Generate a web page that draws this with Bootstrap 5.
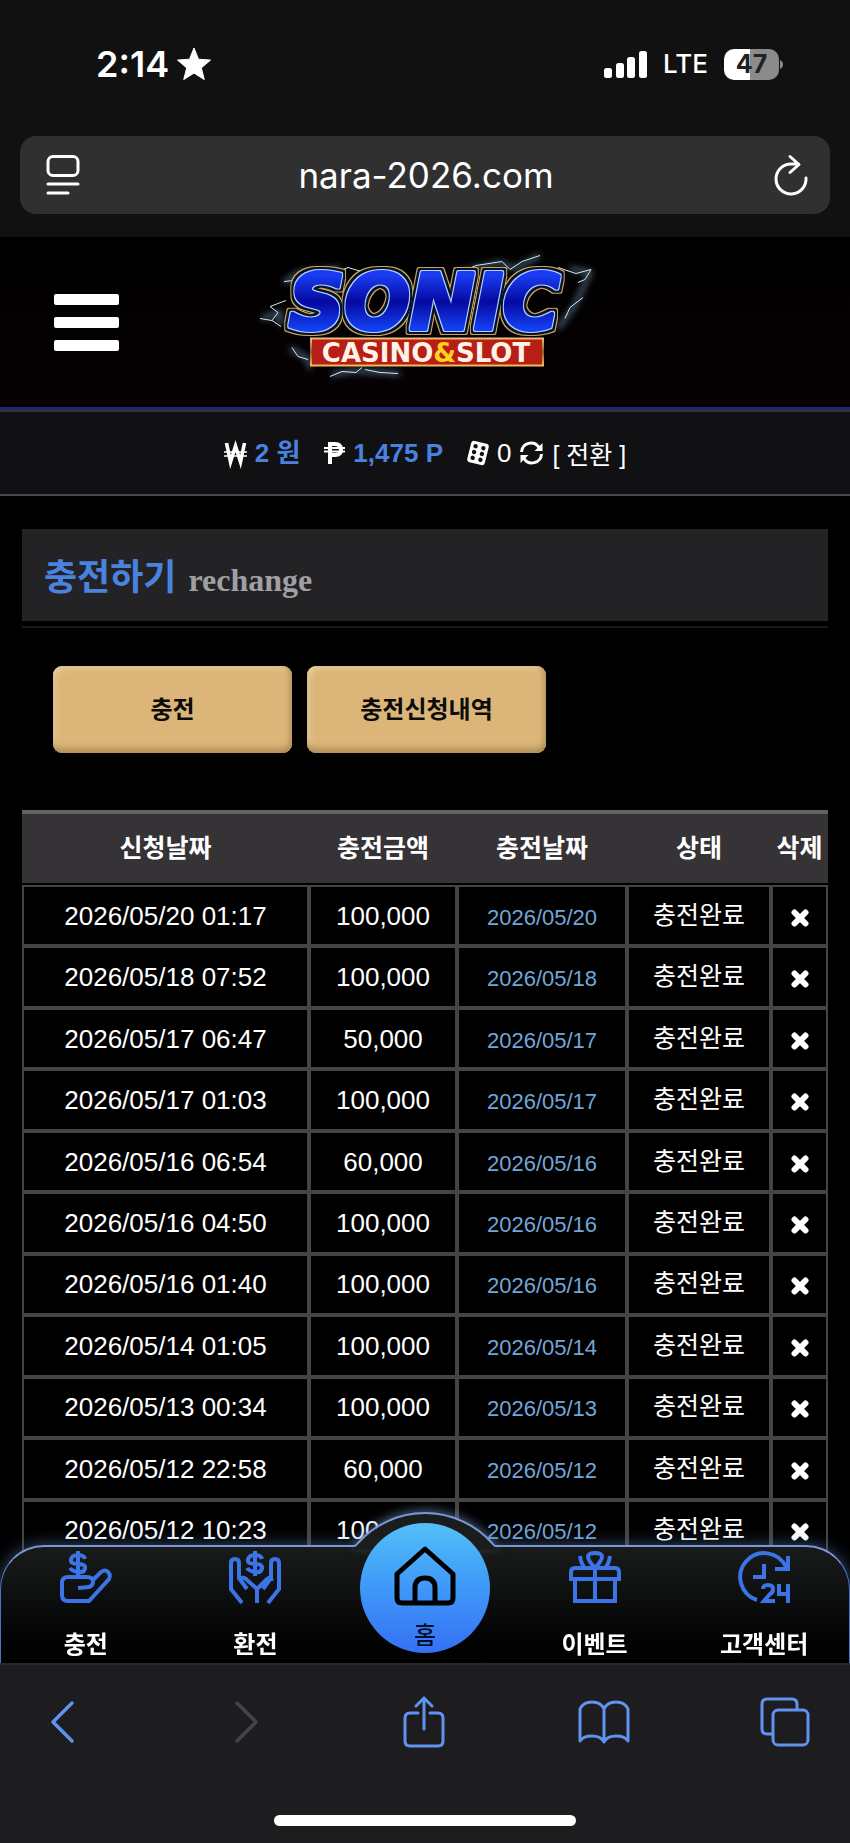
<!DOCTYPE html>
<html lang="ko" data-bs-theme="dark">
<head>
<meta charset="utf-8">
<meta name="viewport" content="width=device-width, initial-scale=1">
<title>충전하기</title>
<link href="https://cdn.jsdelivr.net/npm/bootstrap@5.3.0/dist/css/bootstrap.min.css" rel="stylesheet">
<style>
  body { background: #000; color: #fff; font-family: "Liberation Sans", "Noto Sans CJK KR", sans-serif; font-size: 24px; line-height: 32px; }
  a { color: inherit; text-decoration: none; }
  svg { display: block; flex: none; overflow: visible; }
  .icon-btn { background: none; border: 0; padding: 0; color: inherit; }

  .chrome-top { background: #111; height: 237px; font-family: Inter, sans-serif; }
  .status { height: 136px; padding: 0 67px 8px 96px; }
  .clock { font-size: 36px; font-weight: 600; }
  .carrier { font-size: 26px; font-weight: 500; }
  .battery { width: 55px; height: 31px; border-radius: 10px; background: linear-gradient(90deg, #fff 47%, #8b8b8b 47%); color: #222; font-size: 25px; font-weight: 700; line-height: 31px; }
  .address { height: 78px; margin: 0 20px; padding: 0 22px 0 26px; border-radius: 16px; background: #303030; }
  .address input { background: none; border: 0; color: #fff; font-size: 35px; text-align: center; min-width: 0; outline: 0; }

  .site-head { height: 175px; background: linear-gradient(#000, #070104); border-bottom: 2px solid #333338; box-shadow: inset 0 -3px #1e2a6c; }
  .menu-btn { width: 65px; margin: 0 0 3px 54px; row-gap: 12px; }
  .menu-btn span { height: 11px; border-radius: 2px; background: #fff; }
  .wallet { height: 84px; background: #111113; border-bottom: 2px solid #48484b; font-size: 26px; }
  .wallet b, .page-title h1 { color: #4a82e0; }
  .wallet a { font-size: 25px; }

  .content { padding: 33px 22px 0; }
  .page-title { height: 92px; padding: 6px 22px 0; background: #232325; }
  .page-title h1 { font-size: 36px; line-height: 48px; }
  .page-title small { font: bold 32px/48px "Liberation Serif", serif; color: #a09fa3; }
  .rule { height: 2px; background: #19191b; margin-top: 5px; }
  .tabs-row { margin: 38px 31px 57px; gap: 15px; }
  .gold-btn { width: 239px; height: 87px; border-radius: 9px; background: #dcb678; border: 0; color: #0b0b0b; font-size: 24px; font-weight: 700; box-shadow: inset 0 -7px 7px -3px #a98a55, inset -5px 0 6px -3px #b59460, inset 4px 4px 6px -2px #ecd2a4; }

  .history { table-layout: fixed; border-collapse: separate; border-spacing: 0; height: 751px; text-align: center; }
  .history th { height: 75px; background: #353336; border-top: 4px solid #646265; border-bottom: 2px solid #000; font-size: 25px; padding: 0 0 2px; }
  .history td { border: 2px solid #454346; padding: 0; font-size: 26px; }
  .history td.paid { font-size: 22px; color: #72a6d8; padding: 4px 0 0; }
  .history td.state { font-size: 25px; padding: 0 0 2px; }
  .w-when { width: 287px; } .w-sum { width: 148px; } .w-paid { width: 170px; } .w-state { width: 144px; } .w-del { width: 57px; }

  .dock { height: 118px; border: 1px solid #4a74c8; border-top: 2px solid #7898d8; border-bottom: 0; border-radius: 44px 44px 0 0; background: linear-gradient(#191b1b, #050506 75%, #000); box-shadow: 0 0 16px #5b7eb399; }
  .dock a { padding-top: 4px; font-size: 24px; font-weight: 700; }
  .dock a svg { color: #3a74e6; margin-bottom: 26px; }
  .hump { left: 50%; top: -35px; margin-left: -71px; filter: drop-shadow(0 -3px 5px #7092c888); }
  .home-disc { width: 130px; height: 130px; left: 50%; top: -24px; margin-left: -65px; border-radius: 50%; background: linear-gradient(#52bff8, #3e98f8 50%, #3670f4); }
  .dock .home-disc svg { color: #000; margin: 0; }
  .dock .home-disc { padding-top: 23px; color: #04102c; font-weight: 500; }
  .home-disc span { padding-top: 14px; }

  .chrome-bottom { height: 180px; background: #1d1c1f; border-top: 2px solid #29282b; color: #5f93ee; padding-top: 30px; }
  .tool-row { padding: 0 39px 0 36px; height: 54px; }
  .tool-row .icon-btn { width: 52px; display: flex; justify-content: center; }
  .home-bar { width: 302px; height: 11px; border-radius: 6px; background: #fff; margin: 66px auto 0; }
</style>
</head>
<body>
<svg width="0" height="0" class="position-absolute" aria-hidden="true">
  <symbol id="x" viewBox="0 0 18 18"><path d="M3.500 3.500 14.500 14.500M14.500 3.500 3.500 14.500" stroke="#fff" stroke-width="6" stroke-linecap="round"/></symbol>
</svg>

<header class="chrome-top">
  <div class="status d-flex align-items-end justify-content-between">
    <div class="d-flex align-items-center gap-2 pb-5">
      <span class="clock">2:14</span>
      <svg width="34" height="32" viewBox="0 0 34 32"><path d="M17 0 21.500 11.200 33.500 12.100 24.300 19.900 27.300 31.600 17 25.100 6.700 31.600 9.700 19.900.5 12.100 12.500 11.200Z" fill="#fff" stroke="#fff" stroke-linejoin="round"/></svg>
    </div>
    <div class="d-flex align-items-center gap-3 pb-5">
      <svg width="43" height="27" viewBox="0 0 43 27" fill="#fff"><rect y="17" width="8" height="10" rx="2.500"/><rect x="12" y="12" width="8" height="15" rx="2.500"/><rect x="23" y="6" width="8" height="21" rx="2.500"/><rect x="35" width="8" height="27" rx="2.500"/></svg>
      <span class="carrier">LTE</span>
      <span class="d-flex align-items-center"><span class="battery text-center">47</span><svg width="4" height="9" viewBox="0 0 4 9"><path d="M1 0Q4 1.500 4 4.500T1 9Z" fill="#8b8b8b"/></svg></span>
    </div>
  </div>
  <div class="address d-flex align-items-center">
    <button class="icon-btn" aria-label="페이지 메뉴"><svg width="34" height="40" viewBox="0 0 34 40" fill="none" stroke="#fff" stroke-width="3" stroke-linecap="round"><rect x="2" y="1.500" width="30" height="19" rx="5"/><path d="M2 29H32M2 38H22"/></svg></button>
    <input class="flex-grow-1 pe-1" aria-label="주소" value="nara-2026.com">
    <button class="icon-btn" aria-label="새로고침"><svg width="34" height="40" viewBox="0 0 34 40" fill="none" stroke="#fff" stroke-width="3" stroke-linecap="round" stroke-linejoin="round"><path d="M24 9H17A15 15 0 1 0 32 23M16 1.500 25 9.500 16 17.500"/></svg></button>
  </div>
</header>

<div class="site-head d-flex align-items-center position-relative">
  <button class="icon-btn menu-btn d-grid" aria-label="메뉴"><span></span><span></span><span></span></button>
  <a href="#" class="position-absolute start-50 top-50 translate-middle" aria-label="SONIC CASINO&amp;SLOT">
    <svg width="370" height="167" viewBox="0 0 370 167">
      <defs>
        <linearGradient id="blue" x2="0" y2="1"><stop offset=".2" stop-color="#1a3cf0"/><stop offset=".5" stop-color="#0509a0"/><stop offset=".8" stop-color="#1340f2"/></linearGradient>
        <linearGradient id="gold" x2="0" y2="1"><stop stop-color="#e8c070"/><stop offset=".5" stop-color="#80612e"/><stop offset="1" stop-color="#f0bd57"/></linearGradient>
        <filter id="glow" x="-20%" y="-20%" width="140%" height="140%"><feGaussianBlur stdDeviation="3"/></filter>
        <filter id="rim" x="-10%" y="-20%" width="120%" height="140%" color-interpolation-filters="sRGB">
          <feMorphology in="SourceAlpha" operator="dilate" radius="1" result="d0"/>
          <feFlood flood-color="#b4d2ff"/><feComposite in2="d0" operator="in" result="light"/>
          <feMorphology in="SourceAlpha" operator="dilate" radius="3" result="d1"/>
          <feFlood flood-color="#05122e"/><feComposite in2="d1" operator="in" result="navy"/>
          <feMorphology in="SourceAlpha" operator="dilate" radius="4" result="d2"/>
          <feFlood flood-color="#d0a454"/><feComposite in2="d2" operator="in" result="rimgold"/>
          <feMerge><feMergeNode in="rimgold"/><feMergeNode in="navy"/><feMergeNode in="light"/><feMergeNode in="SourceGraphic"/></feMerge>
        </filter>
      </defs>
      <g fill="none" stroke="#7098b4" stroke-width="4" filter="url(#glow)" opacity=".7"><path d="M44 42 60 32 100 28M220 32 260 22 275 28 300 15M330 28 350 32 335 65 318 88M22 78 40 72 40 85M50 108 68 118 70 128M92 134 115 130 160 133"/></g>
      <g fill="none" stroke="#cfe8f4" stroke-width="1" stroke-linejoin="round"><path d="M44 41 54 40M98 31 108 27 118 30 130 31M222 31 236 25 262 21 270 29 282 21 300 15M318 27 336 33 351 29 345 39 338 42M343 57 330 67 325 78M20 78 32 80 38 72 30 66 46 60M32 80 41 86M52 107 58 116 68 119M90 136 102 131 116 132 122 127M125 129 140 132 158 133"/></g>
      <text x="49" y="88" font-family="'DejaVu Sans', sans-serif" font-weight="bold" font-style="italic" font-size="77" fill="url(#blue)" stroke="url(#blue)" stroke-width="4" stroke-linejoin="round" filter="url(#rim)">SONIC</text>
      <rect x="71" y="98" width="232" height="27" fill="#b81d16" stroke="url(#gold)" stroke-width="2"/>
      <text x="186" y="121" text-anchor="middle" font-family="'DejaVu Sans', sans-serif" font-weight="bold" font-size="26" fill="#fff3e6">CASINO<tspan fill="#ffd21c">&amp;</tspan>SLOT</text>
    </svg>
  </a>
</div>

<div class="wallet d-flex align-items-center justify-content-center">
  <svg width="23" height="20" viewBox="0 0 23 20" fill="none" stroke="#fff"><path d="M2.500 0 6.500 19 11.500 3 16.500 19 20.500 0" stroke-width="3.600"/><path d="M0 9H23M0 13H23" stroke-width="1.500"/></svg>
  <b class="ms-2">2 원</b>
  <svg class="ms-4" width="21" height="22" viewBox="0 0 21 22" fill="none" stroke="#fff"><path d="M6 22V2H11Q17 2 17 7.500T11 13H6" stroke-width="4"/><path d="M0 6H21M0 9.500H21" stroke-width="1.800"/></svg>
  <b class="ms-2">1,475 P</b>
  <svg class="ms-4" width="22" height="24" viewBox="1 0 22 24"><g transform="rotate(14 12 12)"><rect x="3" y="1" width="18" height="22" rx="3" fill="#fff"/><g fill="#111"><circle cx="8" cy="6" r="2.200"/><circle cx="16" cy="6" r="2.200"/><circle cx="8" cy="12" r="2.200"/><circle cx="16" cy="12" r="2.200"/><circle cx="8" cy="18" r="2.200"/><circle cx="16" cy="18" r="2.200"/></g></g></svg>
  <span class="ms-2">0</span>
  <svg class="ms-2" width="25" height="24" viewBox="0 0 25 24" fill="none" stroke="#fff" stroke-width="3"><path d="M2.500 11A9.500 9.500 0 0 1 20 6.500M22.500 13A9.500 9.500 0 0 1 5 17.500"/><path d="M23.500 2V10H15.500ZM1.500 22V14H9.500Z" fill="#fff" stroke="none"/></svg>
  <a href="#" class="ms-2 pt-1">[ 전환 ]</a>
</div>

<main class="content">
  <div class="page-title d-flex align-items-center gap-2">
    <h1 class="fw-bold m-0">충전하기</h1><small class="ps-1 pt-1">rechange</small>
  </div>
  <div class="rule"></div>
  <div class="tabs-row d-flex">
    <button class="gold-btn">충전</button>
    <button class="gold-btn">충전신청내역</button>
  </div>
  <table class="history w-100">
    <thead><tr><th class="w-when">신청날짜</th><th class="w-sum">충전금액</th><th class="w-paid">충전날짜</th><th class="w-state">상태</th><th class="w-del">삭제</th></tr></thead>
    <tbody id="rows"></tbody>
  </table>
</main>

<footer class="fixed-bottom">
  <nav class="dock d-flex position-relative">
    <svg class="hump position-absolute" width="142" height="38" viewBox="0 0 142 38"><path d="M0 38V35Q2 35 4 32A90 90 0 0 1 138 32Q140 35 142 35V38Z" fill="#1b1d1d"/><path d="M0 34Q2 34 4 31A90 90 0 0 1 138 31Q140 34 142 34" fill="none" stroke="#7898d8" stroke-width="2"/></svg>
    <a href="#" class="col d-flex flex-column align-items-center">
      <svg width="52" height="52" viewBox="0 0 52 52" fill="none" stroke="currentColor" stroke-width="4"><path d="M25 8Q24 4 18 4T11 8.500 18 13 25 17.500 18 21 10 17M18 0V26M18 37 29 36Q33 35 33 30.500T27 26H8Q2 26 2 32V44Q2 50 8 50H29L49 28Q51 24 48 21T41 21L32 30"/></svg>충전</a>
    <a href="#" class="col d-flex flex-column align-items-center">
      <svg width="52" height="52" viewBox="0 0 52 52" fill="none" stroke="currentColor" stroke-width="4"><path d="M33 8Q32 4 26 4T19 8.500 26 13 33 17.500 26 21 18 17M26 0V25M13 52 2 38V12Q2 8 6 8T10 12V27L18 38M10 30Q12 25 17 28L28 38V52M28 38 38 28Q42 25 43 30M34 38 42 27V12Q42 8 46 8T50 12V38L39 52"/></svg>환전</a>
    <div class="col"></div>
    <a href="#" class="home-disc position-absolute d-flex flex-column align-items-center">
      <svg width="62" height="60" viewBox="0 0 62 60" fill="none" stroke="currentColor" stroke-width="5" stroke-linejoin="round"><path d="M31 3 59 28V52Q59 57 54 57H8Q3 57 3 52V28ZM21 57V42Q21 32 31 32T41 42V57"/></svg><span>홈</span></a>
    <a href="#" class="col d-flex flex-column align-items-center">
      <svg width="52" height="52" viewBox="0 0 52 52" fill="none" stroke="currentColor" stroke-width="4"><path d="M2 28V21Q2 17 6 17H46Q50 17 50 21V28ZM6 28V50H46V28M26 17V50M26 17Q12 2 26 2T26 17M16 17Q12 13 11 5M36 17Q40 13 41 5"/></svg>이벤트</a>
    <a href="#" class="col d-flex flex-column align-items-center">
      <svg width="52" height="52" viewBox="0 0 52 52" fill="none" stroke="currentColor" stroke-width="4"><path d="M19 49A24 24 0 1 1 48 16M50 5V18H37M26 13V26H15M25 38Q25 34 30 34T35 38 32 43L26 50H37M41 33V43H51M50 33V52"/></svg>고객센터</a>
  </nav>
  <div class="chrome-bottom position-relative">
    <div class="tool-row d-flex justify-content-between align-items-center">
      <button class="icon-btn" aria-label="뒤로"><svg width="28" height="40" viewBox="0 0 28 40" fill="none" stroke="currentColor" stroke-width="3.500" stroke-linecap="round" stroke-linejoin="round"><path d="M24 1 5 20 24 39"/></svg></button>
      <button class="icon-btn" aria-label="앞으로" disabled><svg width="28" height="40" viewBox="0 0 28 40" fill="none" stroke="#454447" stroke-width="3.500" stroke-linecap="round" stroke-linejoin="round"><path d="M8 1 27 20 8 39"/></svg></button>
      <button class="icon-btn" aria-label="공유"><svg width="42" height="52" viewBox="0 0 42 52" fill="none" stroke="currentColor" stroke-width="3" stroke-linecap="round"><path d="M15 17H7Q2 17 2 22V45Q2 50 7 50H35Q40 50 40 45V22Q40 17 35 17H27M21 33V2M13 10 21 2 29 10"/></svg></button>
      <button class="icon-btn" aria-label="책갈피"><svg width="52" height="44" viewBox="0 0 52 44" fill="none" stroke="currentColor" stroke-width="3" stroke-linejoin="round"><path d="M26 42Q23 36 14 36 5 36 2 41V9Q5 2 14 2 23 2 26 9 29 2 38 2 47 2 50 9V41Q47 36 38 36 29 36 26 42V9"/></svg></button>
      <button class="icon-btn" aria-label="탭"><svg width="50" height="50" viewBox="0 0 50 50" fill="none" stroke="currentColor" stroke-width="3"><rect x="13" y="13" width="35" height="35" rx="5"/><path d="M37 12V7Q37 2 32 2H7Q2 2 2 7V32Q2 37 7 37H12"/></svg></button>
    </div>
    <div class="home-bar"></div>
  </div>
</footer>

<script>
  const entries = [
    ["2026/05/20 01:17", "100,000"], ["2026/05/18 07:52", "100,000"], ["2026/05/17 06:47", "50,000"],
    ["2026/05/17 01:03", "100,000"], ["2026/05/16 06:54", "60,000"], ["2026/05/16 04:50", "100,000"],
    ["2026/05/16 01:40", "100,000"], ["2026/05/14 01:05", "100,000"], ["2026/05/13 00:34", "100,000"],
    ["2026/05/12 22:58", "60,000"], ["2026/05/12 10:23", "100,000"]
  ];
  document.getElementById("rows").innerHTML = entries.map(([when, sum]) => `
    <tr><td>${when}</td><td>${sum}</td><td class="paid">${when.slice(0, 10)}</td><td class="state">충전완료</td>
    <td><button class="icon-btn mx-auto d-block pt-1" aria-label="삭제"><svg width="18" height="18"><use href="#x"/></svg></button></td></tr>`).join("");
</script>
<script src="https://cdn.jsdelivr.net/npm/bootstrap@5.3.0/dist/js/bootstrap.bundle.min.js"></script>
</body>
</html>
